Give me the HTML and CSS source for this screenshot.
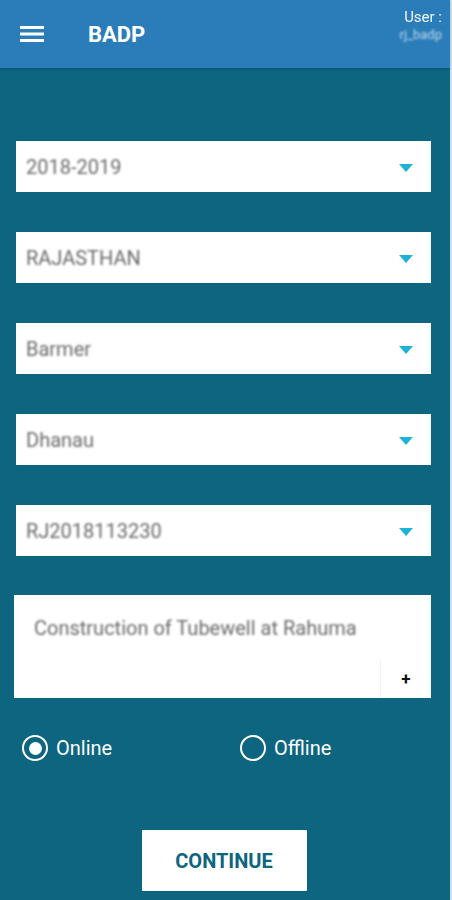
FILE: index.html
```html
<!DOCTYPE html>
<html>
<head>
<meta charset="utf-8">
<link rel="stylesheet" href="styles.css">
</head>
<body>
<div class="app">
  <header class="topbar">
    <div class="menu">
      <svg width="24" height="18" viewBox="0 0 24 18"><rect x="0" y="1" width="24" height="3" fill="#fff"/><rect x="0" y="7.5" width="24" height="3" fill="#fff"/><rect x="0" y="14" width="24" height="3" fill="#fff"/></svg>
    </div>
    <div class="title">BADP</div>
    <div class="user">
      <div class="user-label">User :</div>
      <div class="user-name">rj_badp</div>
    </div>
  </header>
  <main class="content">
    <div class="select"><span class="val">2018-2019</span><span class="arrow"></span></div>
    <div class="select"><span class="val">RAJASTHAN</span><span class="arrow"></span></div>
    <div class="select"><span class="val">Barmer</span><span class="arrow"></span></div>
    <div class="select"><span class="val">Dhanau</span><span class="arrow"></span></div>
    <div class="select"><span class="val">RJ2018113230</span><span class="arrow"></span></div>
    <div class="textbox">
      <div class="tb-text">Construction of Tubewell at Rahuma</div>
      <div class="tb-plus">+</div>
    </div>
    <div class="radios">
      <label class="radio"><span class="circle on"></span>Online</label>
      <label class="radio"><span class="circle"></span>Offline</label>
    </div>
    <div class="btn-row"><button class="btn">CONTINUE</button></div>
  </main>
</div>
</body>
</html>
```
FILE: styles.css
```css
html, body { margin: 0; padding: 0; }
body {
  background: #c9e2ea;
  font-family: Roboto, "Noto Sans", sans-serif;
  width: 452px;
  height: 900px;
  overflow: hidden;
}
.app {
  width: 450px;
  height: 900px;
  background: #0d6580;
  display: flex;
  flex-direction: column;
}
.topbar {
  height: 68px;
  background: #2a7db9;
  display: flex;
  align-items: center;
  position: relative;
  box-shadow: 0 1px 2px rgba(0,0,0,0.2);
}
.menu { margin-left: 20px; width: 24px; height: 18px; display: flex; margin-top: -1px; }
.title {
  margin-left: 44px;
  color: #fff;
  font-weight: 700;
  font-size: 22px;
}
.user {
  position: absolute;
  right: 8px;
  top: 8px;
  text-align: right;
}
.user-label { color: #f4f8fc; font-size: 15px; line-height: 18px; font-weight: 400; filter: blur(0.4px); }
.user-name { color: #bcd8ef; font-size: 13px; line-height: 17px; filter: blur(1.3px); }
.content {
  display: flex;
  flex-direction: column;
  padding-top: 73px;
}
.select {
  margin: 0 19px 40px 16px;
  height: 51px;
  background: #fff;
  display: flex;
  align-items: center;
  justify-content: space-between;
  padding: 0 18px 0 10px;
}
.val {
  color: #6a6a6a;
  font-size: 20px;
  filter: blur(1.3px);
}
.arrow {
  width: 0; height: 0;
  border-left: 7px solid transparent;
  border-right: 7px solid transparent;
  border-top: 8px solid #1cb3d6;
  margin-top: 2px;
}
.textbox {
  margin: -1px 19px 0 14px;
  height: 103px;
  background: #fff;
  position: relative;
}
.tb-text {
  color: #6a6a6a;
  font-size: 20px;
  padding: 21px 0 0 20px;
  filter: blur(1px);
}
.tb-plus {
  position: absolute;
  right: 0;
  bottom: 0;
  width: 50px;
  height: 38px;
  border-left: 1px solid #f0f0f0;
  display: flex;
  align-items: center;
  justify-content: center;
  font-size: 17px;
  font-weight: 700;
  color: #111;
}
.radios {
  display: flex;
  margin-top: 37px;
  padding-left: 22px;
  height: 26px;
  align-items: center;
}
.radio {
  display: flex;
  align-items: center;
  color: #fff;
  font-size: 20px;
  flex: 0 0 218px;
}
.circle {
  flex: 0 0 26px;
  width: 26px; height: 26px;
  border: 2.5px solid #fff;
  border-radius: 50%;
  box-sizing: border-box;
  margin-right: 8px;
  display: flex;
  align-items: center;
  justify-content: center;
}
.circle.on::after {
  content: "";
  width: 13px; height: 13px;
  border-radius: 50%;
  background: #fff;
}
.btn-row {
  display: flex;
  justify-content: center;
  margin-top: 69px;
  padding-right: 2px;
}
.btn {
  width: 165px;
  height: 61px;
  background: #fff;
  border: none;
  border-radius: 1px;
  color: #0d6580;
  font-family: Roboto, sans-serif;
  font-weight: 700;
  font-size: 20px;
}
```
